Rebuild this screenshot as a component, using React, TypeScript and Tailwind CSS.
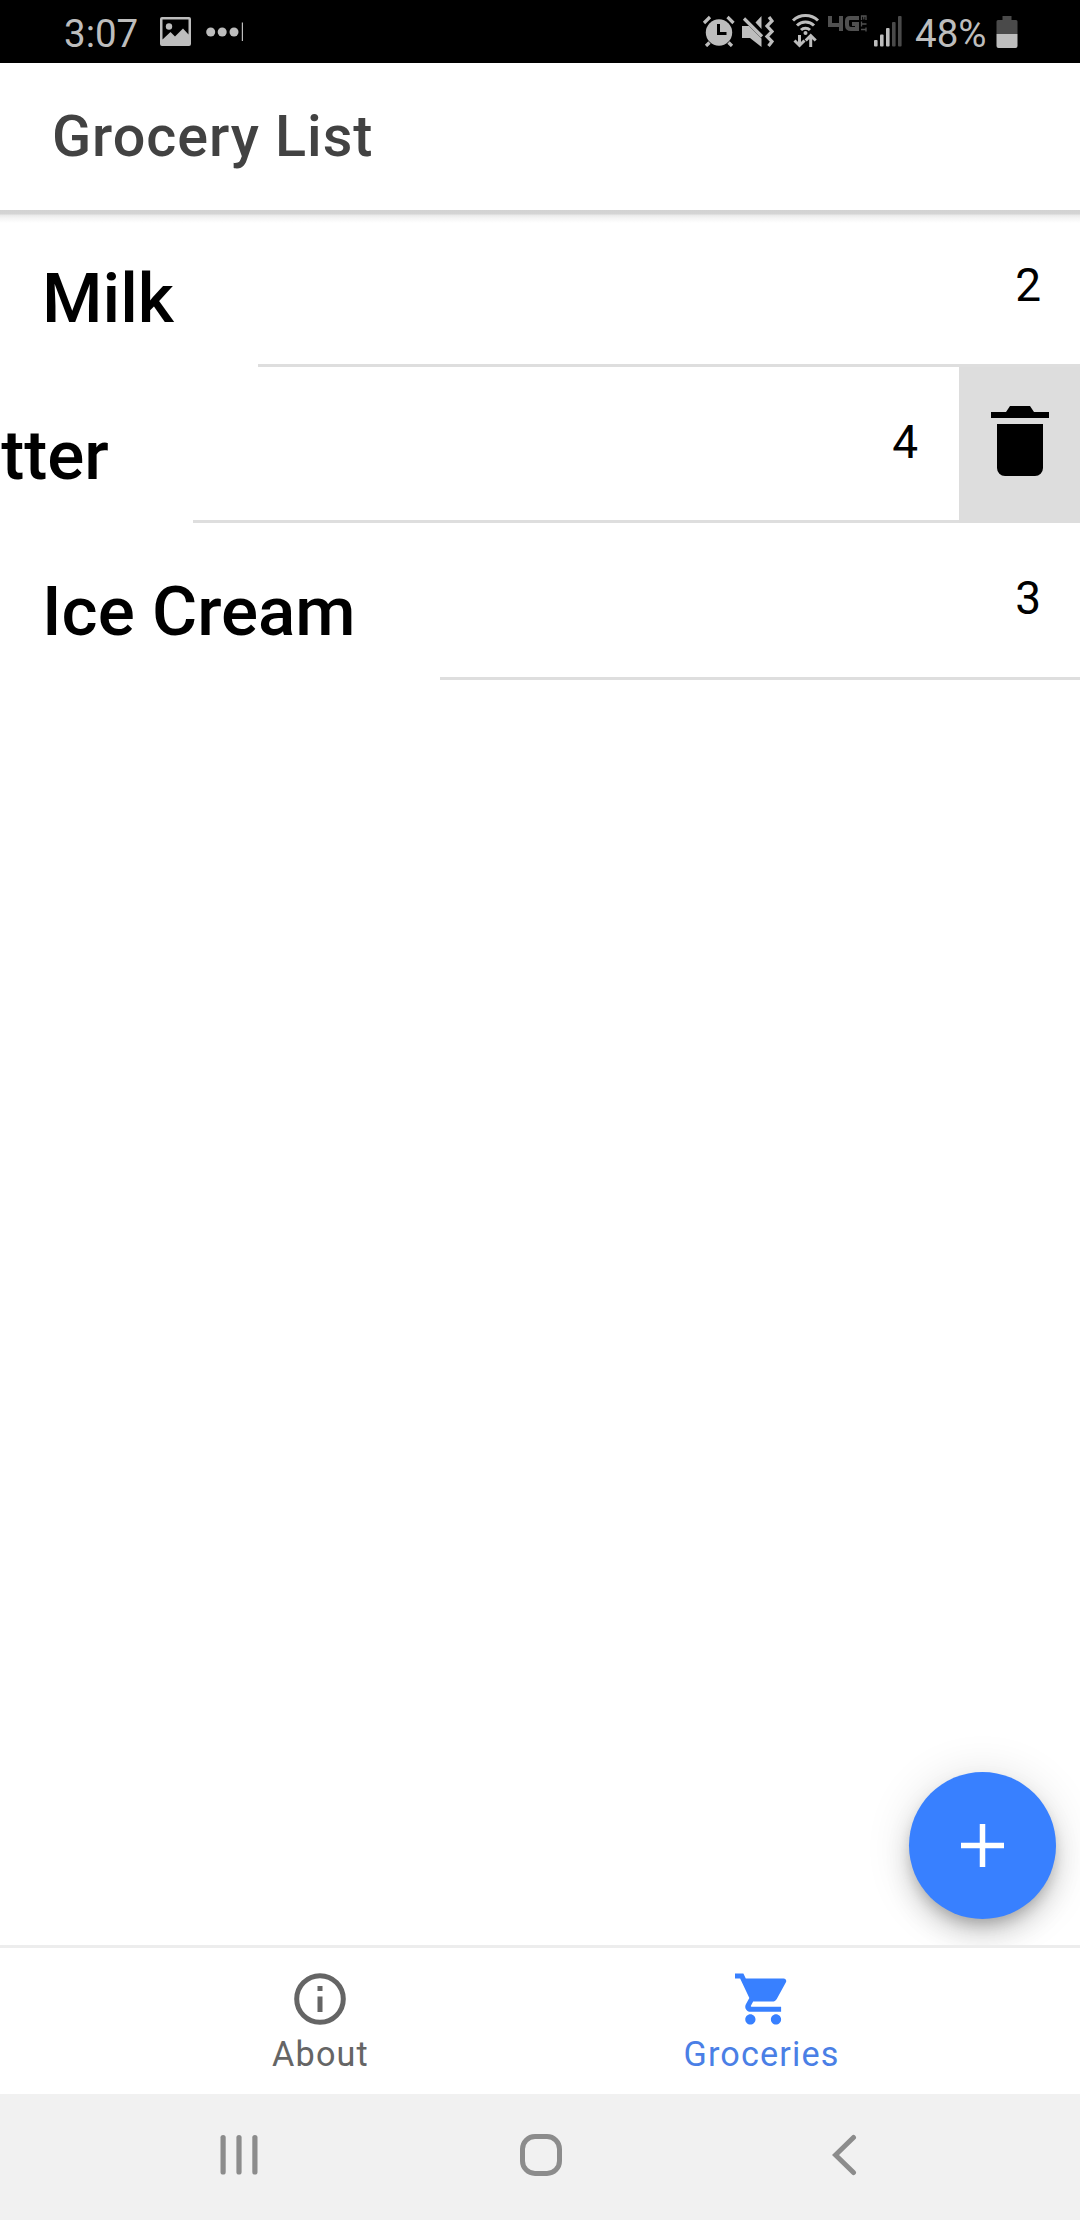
import React from "react";

const GREY = "#bdbdbd";

function StatusBar() {
  return (
    <header className="flex h-[63px] shrink-0 items-start bg-black text-[38.5px] leading-[45px] text-[#bdbdbd]">
      <span className="mt-[11px] ml-[64px] w-[96px]">3:07</span>
      <svg className="mt-[17px] h-[29px] w-[31px]" viewBox="0 0 31 29">
        <path
          fillRule="evenodd"
          fill={GREY}
          d="M2 0h27a2 2 0 0 1 2 2v25a2 2 0 0 1-2 2H2a2 2 0 0 1-2-2V2a2 2 0 0 1 2-2ZM2.500 2.500v20l8-7.500 4.500 4.500 8-8 5.500 6V2.500Z"
        />
        <circle cx="9" cy="9.500" r="3.200" fill={GREY} />
      </svg>
      <svg className="mt-[22px] ml-[15px] h-[20px] w-[38px]" viewBox="0 0 38 20" fill={GREY}>
        <circle cx="4.700" cy="10" r="4.500" />
        <circle cx="16.200" cy="10" r="4.500" />
        <circle cx="28" cy="10" r="4.500" />
        <rect x="35.800" y="0.500" width="1.200" height="18.500" />
      </svg>

      {/* Alarm */}
      <svg className="mt-[15px] ml-auto h-[32px] w-[33px]" viewBox="0 0 33 32">
        <circle cx="17" cy="17.500" r="13.200" fill={GREY} />
        <path d="M2 8l6-6M25.500 2l6 6M7.500 27.500L4 31M26.500 27.500L30 31" stroke={GREY} strokeWidth="3.200" />
        <path d="M16.500 9v9.500h8" fill="none" stroke="#000" strokeWidth="3" />
      </svg>
      {/* Muted speaker with vibration */}
      <svg className="mt-[15px] ml-[6px] h-[33px] w-[33px]" viewBox="0 0 33 33">
        <path d="M1 11h7l12.500 12.500V32L9 23H1ZM14.500 7.500l6-6.500v13Z" fill={GREY} />
        <path d="M3 3.500l18 18" stroke={GREY} strokeWidth="3.200" />
        <path d="M28 2l3 4-5 5 5 5.500-5 5 5 5-3.500 4.500" fill="none" stroke={GREY} strokeWidth="3.200" />
      </svg>
      {/* Wi-Fi with transfer arrows */}
      <svg className="mt-[13px] ml-[17px] h-[36px] w-[30px]" viewBox="0 0 30 36" fill="none" stroke={GREY} strokeWidth="3">
        <path d="M2 7.500a18 18 0 0 1 25 0M6 12.500a12 12 0 0 1 17 0M10 17a6.500 6.500 0 0 1 9 0" />
        <circle cx="14.500" cy="20" r="2" fill={GREY} stroke="none" />
        <path d="M8.500 22v10.500M3.500 27.500l5 5 5-5M19.700 34V22.500M14.700 27.500l5-5 5 5" />
      </svg>
      <svg className="mt-[15px] ml-[7px] h-[17px] w-[39px]" viewBox="0 0 39 17" fill="none" stroke="#505050" strokeWidth="4">
        <path d="M2 1v9h12M13 1v15M31 3H22q-3 0-3 3v4q0 4 4 4h6V9h-5" />
        <path d="M33 14.500h5.500M38 16.500v-4M33 9h5.500M33.500 6.500v5M33.500 5V1h4.500v4M35.800 1v3.500" strokeWidth="1.300" />
      </svg>
      <svg className="mt-[16px] ml-[6px] h-[31px] w-[30px]" viewBox="0 0 30 31">
        <g fill={GREY}>
          <rect x="1" y="24" width="3.600" height="6.500" rx="1" />
          <rect x="7" y="18.500" width="3.600" height="12" rx="1" />
          <rect x="13" y="12" width="3.600" height="18.500" rx="1" />
        </g>
        <g fill="#4a4a4a">
          <rect x="19" y="6" width="3.600" height="24.500" rx="1" />
          <rect x="25" y="0" width="3.600" height="30.500" rx="1" />
        </g>
      </svg>
      <span className="mt-[11px] ml-[12px] w-[81px] whitespace-nowrap">48%</span>
      <svg className="mt-[15px] mr-[62px] h-[33px] w-[22px]" viewBox="0 0 22 33">
        <path d="M6.500 1h9v4H20a1.500 1.500 0 0 1 1.500 1.500V19H.5V6.500A1.500 1.500 0 0 1 2 5h4.500Z" fill="#4a4a4a" />
        <path d="M.5 19h21v12a2 2 0 0 1-2 2h-17a2 2 0 0 1-2-2Z" fill={GREY} />
      </svg>
    </header>
  );
}

function Item({ name, qty }: { name: string; qty: number }) {
  return (
    <div className="flex h-full w-full shrink-0 bg-white pl-[42px] text-black">
      <h2 className="mr-[84px] pt-[48px] text-[69.2px] leading-[81px] font-medium whitespace-nowrap">{name}</h2>
      <div className="flex flex-1 justify-end border-b-[3px] border-[#dedede] pt-[48px] pr-[39px] text-[46px] leading-[55px]">
        {qty}
      </div>
    </div>
  );
}

export default function App() {
  return (
    <div className="flex h-[2220px] w-[1080px] flex-col overflow-hidden bg-white font-['Roboto',sans-serif]">
      <StatusBar />
      <div className="relative z-10 flex h-[147px] shrink-0 items-center bg-white pl-[52px]">
        <h1 className="text-[57.5px] leading-[68px] font-medium tracking-[0.95px] text-[#424242]">Grocery List</h1>
        <div className="absolute inset-x-0 top-full h-[13px] bg-[linear-gradient(#d2d2d2_0px,#d4d4d4_4px,#e9e9e9_5px,#f4f4f4_8px,#fff_13px)]" />
      </div>

      <main className="relative flex-1">
        <div className="h-[157px]">
          <Item name="Milk" qty={2} />
        </div>
        <div className="flex h-[156px] overflow-hidden">
          <div className="-ml-[123px] flex w-[1080px] shrink-0">
            <Item name="Butter" qty={4} />
          </div>
          <div className="w-[2px] shrink-0 border-b-[3px] border-[#dedede]" />
          <button className="-mt-[2px] flex h-[158px] w-[121px] shrink-0 justify-center bg-[#dddddd] pt-[41px]">
            <svg className="h-[70px] w-[58px]" viewBox="0 0 58 70">
              <path d="M6 18h46v44a8 8 0 0 1-8 8H14a8 8 0 0 1-8-8ZM0 6h15l4-6h20l4 6h15v6H0Z" />
            </svg>
          </button>
        </div>
        <div className="h-[157px]">
          <Item name="Ice Cream" qty={3} />
        </div>
        <button className="absolute right-[24px] bottom-[26px] flex size-[147px] items-center justify-center rounded-full bg-[#3880ff] shadow-[0_8px_13px_-3px_rgba(0,0,0,0.2),0_16px_26px_rgba(0,0,0,0.14),0_3px_47px_rgba(0,0,0,0.12)]">
          <svg className="h-[43px] w-[43px]" viewBox="0 0 43 43" stroke="#fff" strokeWidth="5.500">
            <path d="M0 21.500h43M21.500 0v43" />
          </svg>
        </button>
      </main>

      <nav className="z-10 flex h-[149px] shrink-0 justify-center border-t-[3px] border-[#ededed] bg-white text-[34.2px] leading-[40px] tracking-[1.15px]">
        <div className="flex w-[441px] flex-col items-center pt-[25px] text-[#656565]">
          <svg className="size-[52px]" viewBox="0 0 52 52">
            <circle cx="26" cy="26" r="23.300" fill="none" stroke="#656565" strokeWidth="5" />
            <path d="M23.500 13h5v5h-5zM23.500 23.500h5V39h-5z" fill="#656565" />
          </svg>
          <span className="mt-[9px] pl-[2px]">About</span>
        </div>
        <div className="flex w-[441px] flex-col items-center pt-[25px] text-[#4a7fe6]">
          <svg className="h-[52px] w-[52px]" viewBox="1 2 20.300 20" fill="#3880ff">
            <path d="M7 18c-1.100 0-1.990.9-1.990 2S5.900 22 7 22s2-.9 2-2-.9-2-2-2zM1 2v2h2l3.600 7.590-1.350 2.450c-.16.28-.25.61-.25.96 0 1.100.9 2 2 2h12v-2H7.420c-.14 0-.25-.11-.25-.25l.03-.12.9-1.630h7.450c.75 0 1.410-.41 1.750-1.030l3.580-6.490c.08-.14.12-.31.12-.48 0-.55-.45-1-1-1H5.210l-.94-2H1zm16 16c-1.100 0-1.990.9-1.990 2s.89 2 1.990 2 2-.9 2-2-.9-2-2-2z" />
          </svg>
          <span className="mt-[9px] pl-[2px]">Groceries</span>
        </div>
      </nav>

      <footer className="z-10 flex h-[126px] shrink-0 items-start bg-[#f1f1f1] pt-[40px]">
        <svg className="ml-[220px] h-[42px] w-[38px]" viewBox="0 0 38 42" fill="#8c8c8c">
          <rect x="0.500" y="1" width="5.200" height="39.500" rx="2.600" />
          <rect x="16.400" y="1" width="5.200" height="39.500" rx="2.600" />
          <rect x="32.300" y="1" width="5.200" height="39.500" rx="2.600" />
        </svg>
        <div className="ml-[262px] size-[42px] rounded-[15px] border-[5px] border-[#8c8c8c]" />
        <svg className="ml-[270px] h-[42px] w-[25px]" viewBox="0 0 25 42" fill="none" stroke="#8c8c8c" strokeWidth="5" strokeLinecap="round">
          <path d="M21.500 3.500L3.500 21l18 17.500" />
        </svg>
      </footer>
    </div>
  );
}
